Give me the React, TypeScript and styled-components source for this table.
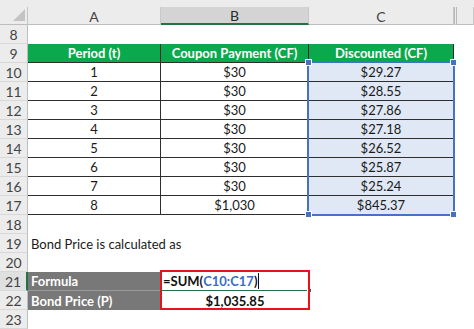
import React from "react";
import styled, { createGlobalStyle } from "styled-components";

const Global = createGlobalStyle`
  html, body { margin: 0; padding: 0; background: #ffffff; }
  body { font-family: Lato, "Liberation Sans", sans-serif; }
`;

const Sheet = styled.div`
  display: grid;
  grid-template-columns: 28px 133px 148px 145px 20px;
  grid-template-rows: 7px 18px repeat(16, 19px);
  width: 474px;
  height: 329px;
  overflow: hidden;
  background: #ffffff;
  font-family: Lato, "Liberation Sans", sans-serif;
  font-size: 13px;
  color: #1a1a1a;
`;

type Pos = { $r: number; $c: number | string };

const TopStrip = styled.div`
  grid-row: 1;
  grid-column: 1 / -1;
  background: #ececec;
`;

const Corner = styled.div`
  grid-row: 2;
  grid-column: 1;
  display: flex;
  align-items: flex-end;
  justify-content: flex-end;
  padding: 0 2px 3px 0;
  background: #ececec;
  border-right: 1px solid #c4c4c4;
  border-bottom: 1px solid #bdbdbd;
  box-sizing: border-box;
`;

const CornerTriangle = styled.div`
  width: 0;
  height: 0;
  border-left: 12px solid transparent;
  border-bottom: 12px solid #c4c4c4;
`;

const ColHead = styled.div<Pos & { $active?: boolean; $split?: boolean }>`
  grid-row: 2;
  grid-column: ${(p) => p.$c};
  display: flex;
  align-items: center;
  justify-content: center;
  box-sizing: border-box;
  background: ${(p) => (p.$active ? "#d4d4d4" : "#ececec")};
  border-right: 1px solid #c8c8c8;
  border-left: ${(p) => (p.$split ? "3px double #b8b8b8" : "none")};
  border-bottom: ${(p) => (p.$active ? "2px solid #217346" : "1px solid #bdbdbd")};
  color: ${(p) => (p.$active ? "#2a2a2a" : "#444444")};
  font-size: 14px;
  padding-top: 1px;
`;

const RowHead = styled.div<Pos & { $active?: boolean }>`
  grid-row: ${(p) => p.$r};
  grid-column: 1;
  display: flex;
  align-items: center;
  justify-content: center;
  box-sizing: border-box;
  background: ${(p) => (p.$active ? "#e0e0e0" : "#ececec")};
  border-bottom: 1px solid #d8d8d8;
  border-right: ${(p) => (p.$active ? "2px solid #217346" : "1px solid #bdbdbd")};
  color: #444444;
  font-size: 14px;
`;

const Cell = styled.div<
  Pos & {
    $align?: "left" | "center" | "right";
    $fill?: string;
    $ink?: string;
    $bold?: boolean;
    $grid?: boolean;
    $rule?: string;
    $pad?: number;
  }
>`
  grid-row: ${(p) => p.$r};
  grid-column: ${(p) => p.$c};
  display: flex;
  align-items: center;
  justify-content: ${(p) =>
    p.$align === "left" ? "flex-start" : p.$align === "right" ? "flex-end" : "center"};
  box-sizing: border-box;
  padding: 0 ${(p) => (p.$align === "right" ? p.$pad ?? 3 : 0)}px 0
    ${(p) => (p.$align === "left" ? p.$pad ?? 3 : 0)}px;
  background: ${(p) => p.$fill ?? "transparent"};
  color: ${(p) => p.$ink ?? "#1a1a1a"};
  font-weight: ${(p) => (p.$bold ? 700 : 400)};
  border-right: ${(p) => (p.$grid ? "1px solid #2e2e2e" : "none")};
  border-bottom: ${(p) =>
    p.$grid ? "1px solid #2e2e2e" : p.$rule ? `1px solid ${p.$rule}` : "none"};
  white-space: nowrap;
  overflow: visible;
`;

const Note = styled.div<Pos>`
  grid-row: ${(p) => p.$r};
  grid-column: 2 / -1;
  display: flex;
  align-items: center;
  padding-left: 3px;
  white-space: nowrap;
  color: #1a1a1a;
`;

const RangeSelection = styled.div`
  grid-row: 5 / 13;
  grid-column: 4 / 5;
  position: relative;
  z-index: 2;
  margin: -2px -1px -1px -2px;
  border: 2px solid #4472c4;
  pointer-events: none;
`;

const Handle = styled.span<{ $v: "top" | "bottom"; $h: "left" | "right" }>`
  position: absolute;
  ${(p) => p.$v}: -4px;
  ${(p) => p.$h}: -4px;
  width: 5px;
  height: 5px;
  background: #4472c4;
  border: 0.5px solid #ffffff;
`;

const RedFrame = styled.div`
  grid-row: 16 / 18;
  grid-column: 3 / 4;
  position: relative;
  z-index: 3;
  margin: -2px -1px 0 -1px;
  border: 2px solid #e8141c;
  pointer-events: none;
`;

const FormulaCell = styled.div`
  grid-row: 16;
  grid-column: 3;
  display: flex;
  align-items: center;
  position: relative;
  box-sizing: border-box;
  padding-left: 2px;
  font-weight: 700;
  color: #111111;
  border-bottom: 1px solid #217346;
  white-space: nowrap;
`;

const RefText = styled.span`
  color: #3a6cc6;
`;

const Caret = styled.span`
  display: inline-block;
  width: 1px;
  height: 16px;
  margin-left: 1px;
  background: #111111;
`;

const FillHandle = styled.span`
  position: absolute;
  right: -3px;
  bottom: -3px;
  width: 5px;
  height: 5px;
  background: #217346;
  border: 1px solid #ffffff;
  box-sizing: border-box;
`;

const GREEN = "#0aa94e";
const BLUE_FILL = "#e0e8f5";
const GRAY_FILL = "#787878";

const rows: [number, string, string][] = [
  [1, "$30", "$29.27"],
  [2, "$30", "$28.55"],
  [3, "$30", "$27.86"],
  [4, "$30", "$27.18"],
  [5, "$30", "$26.52"],
  [6, "$30", "$25.87"],
  [7, "$30", "$25.24"],
  [8, "$1,030", "$845.37"],
];

const gridRow = (sheetRow: number) => sheetRow - 5;

export default function App() {
  const sheetRows = Array.from({ length: 16 }, (_, i) => 8 + i);
  return (
    <>
      <Global />
      <Sheet>
        <TopStrip />
        <Corner>
          <CornerTriangle />
        </Corner>
        <ColHead $r={2} $c={2}>A</ColHead>
        <ColHead $r={2} $c={3} $active>B</ColHead>
        <ColHead $r={2} $c={4}>C</ColHead>
        <ColHead $r={2} $c={5} $split />

        {sheetRows.map((n) => (
          <RowHead key={n} $r={gridRow(n)} $c={1} $active={n === 21}>
            {n}
          </RowHead>
        ))}

        <Cell $r={gridRow(9)} $c={2} $fill={GREEN} $ink="#ffffff" $bold $grid>
          Period (t)
        </Cell>
        <Cell $r={gridRow(9)} $c={3} $fill={GREEN} $ink="#ffffff" $bold $grid>
          Coupon Payment (CF)
        </Cell>
        <Cell $r={gridRow(9)} $c={4} $fill={GREEN} $ink="#ffffff" $bold $grid>
          Discounted (CF)
        </Cell>

        {rows.map(([t, cf, dcf], i) => (
          <React.Fragment key={t}>
            <Cell $r={gridRow(10 + i)} $c={2} $grid>
              {t}
            </Cell>
            <Cell $r={gridRow(10 + i)} $c={3} $grid>
              {cf}
            </Cell>
            <Cell $r={gridRow(10 + i)} $c={4} $fill={BLUE_FILL} $grid>
              {dcf}
            </Cell>
          </React.Fragment>
        ))}

        <Note $r={gridRow(19)} $c={2}>Bond Price is calculated as</Note>

        <Cell
          $r={gridRow(21)}
          $c={2}
          $align="left"
          $fill={GRAY_FILL}
          $ink="#ffffff"
          $bold
          $rule="#9a9a9a"
        >
          Formula
        </Cell>
        <Cell $r={gridRow(22)} $c={2} $align="left" $fill={GRAY_FILL} $ink="#ffffff" $bold>
          Bond Price (P)
        </Cell>

        <FormulaCell>
          =SUM(<RefText>C10:C17</RefText>)<Caret />
          <FillHandle />
        </FormulaCell>
        <Cell $r={gridRow(22)} $c={3} $bold $ink="#111111">
          $1,035.85
        </Cell>

        <RangeSelection>
          <Handle $v="top" $h="left" />
          <Handle $v="top" $h="right" />
          <Handle $v="bottom" $h="left" />
          <Handle $v="bottom" $h="right" />
        </RangeSelection>
        <RedFrame />
      </Sheet>
    </>
  );
}
